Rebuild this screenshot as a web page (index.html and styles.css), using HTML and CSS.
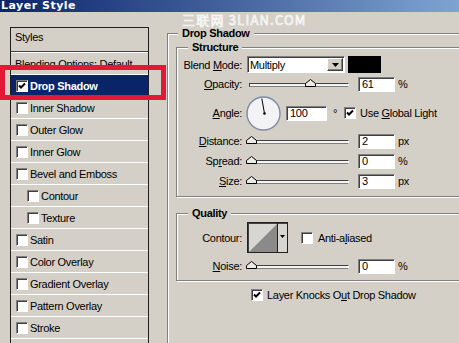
FILE: index.html
```html
<!DOCTYPE html>
<html lang="en">
<head>
    <meta charset="UTF-8">
    <title>Layer Style</title>
    <link rel="stylesheet" href="styles.css">
</head>
<body>
    <div class="titlebar">Layer Style</div>

    <div class="dialog">
        <!-- Styles list -->
        <div class="styles-list">
            <div class="list-head">Styles</div>
            <div class="list-row plain">Blending Options: Default</div>
            <div class="list-row selected">
                <span class="check"><svg viewBox="0 0 10 10"><path d="M2 4.5 L4 6.5 L8 2.5"/></svg></span>Drop Shadow
            </div>
            <div class="list-row"><span class="check"></span>Inner Shadow</div>
            <div class="list-row"><span class="check"></span>Outer Glow</div>
            <div class="list-row"><span class="check"></span>Inner Glow</div>
            <div class="list-row"><span class="check"></span>Bevel and Emboss</div>
            <div class="list-row sub"><span class="check"></span>Contour</div>
            <div class="list-row sub"><span class="check"></span>Texture</div>
            <div class="list-row"><span class="check"></span>Satin</div>
            <div class="list-row"><span class="check"></span>Color Overlay</div>
            <div class="list-row"><span class="check"></span>Gradient Overlay</div>
            <div class="list-row"><span class="check"></span>Pattern Overlay</div>
            <div class="list-row"><span class="check"></span>Stroke</div>
            <div class="list-row"></div>
        </div>

        <!-- Drop Shadow settings -->
        <fieldset class="group outer">
            <legend>Drop Shadow</legend>

            <fieldset class="group structure">
                <legend>Structure</legend>

                <div class="field blend-row">
                    <span class="label">Blend <u>M</u>ode:</span>
                    <div class="select">
                        <span class="select-text">Multiply</span>
                        <span class="drop-btn"><svg width="7" height="4" viewBox="0 0 7 4"><polygon points="0,0 7,0 3.5,4"/></svg></span>
                    </div>
                    <span class="swatch"></span>
                </div>

                <div class="field slider-row">
                    <span class="label"><u>O</u>pacity:</span>
                    <div class="slider">
                        <div class="track"></div>
                        <svg class="thumb" style="left: 59px" width="11" height="8" viewBox="0 0 11 8"><polygon points="0.5,7.5 0.5,4.5 5.5,0.5 10.5,4.5 10.5,7.5"/></svg>
                    </div>
                    <input class="num" type="text" value="61" readonly>
                    <span class="unit">%</span>
                </div>

                <div class="field angle-row">
                    <span class="label"><u>A</u>ngle:</span>
                    <svg class="dial" width="35" height="35" viewBox="0 0 35 35">
                        <circle cx="17.5" cy="17.5" r="16.5" fill="#f3f3f6" stroke="#7d8ba6" stroke-width="1.4"/>
                        <line x1="18.5" y1="17.5" x2="15.8" y2="2.5" stroke="#000" stroke-width="1"/>
                        <circle cx="18.5" cy="17.5" r="1.3" fill="#000"/>
                    </svg>
                    <input class="num angle" type="text" value="100" readonly>
                    <span class="deg">°</span>
                    <span class="check global"><svg viewBox="0 0 10 10"><path d="M2 4.5 L4 6.5 L8 2.5"/></svg></span>
                    <span class="check-text">Use <u>G</u>lobal Light</span>
                </div>

                <div class="field slider-row">
                    <span class="label"><u>D</u>istance:</span>
                    <div class="slider">
                        <div class="track"></div>
                        <svg class="thumb" style="left: 0px" width="11" height="8" viewBox="0 0 11 8"><polygon points="0.5,7.5 0.5,4.5 5.5,0.5 10.5,4.5 10.5,7.5"/></svg>
                    </div>
                    <input class="num" type="text" value="2" readonly>
                    <span class="unit">px</span>
                </div>

                <div class="field slider-row">
                    <span class="label">Sp<u>r</u>ead:</span>
                    <div class="slider">
                        <div class="track"></div>
                        <svg class="thumb" style="left: 0px" width="11" height="8" viewBox="0 0 11 8"><polygon points="0.5,7.5 0.5,4.5 5.5,0.5 10.5,4.5 10.5,7.5"/></svg>
                    </div>
                    <input class="num" type="text" value="0" readonly>
                    <span class="unit">%</span>
                </div>

                <div class="field slider-row">
                    <span class="label"><u>S</u>ize:</span>
                    <div class="slider">
                        <div class="track"></div>
                        <svg class="thumb" style="left: 0px" width="11" height="8" viewBox="0 0 11 8"><polygon points="0.5,7.5 0.5,4.5 5.5,0.5 10.5,4.5 10.5,7.5"/></svg>
                    </div>
                    <input class="num" type="text" value="3" readonly>
                    <span class="unit">px</span>
                </div>
            </fieldset>

            <fieldset class="group quality">
                <legend>Quality</legend>

                <div class="field contour-row">
                    <span class="label">Contour:</span>
                    <svg class="contour" width="41" height="31" viewBox="0 0 41 31">
                        <rect x="0.5" y="0.5" width="40" height="30" fill="#d8d6d0" stroke="#202020"/>
                        <rect x="1" y="1" width="39" height="1" fill="#404040"/>
                        <rect x="1" y="1" width="1" height="29" fill="#404040"/>
                        <polygon points="2,30 30,2 30,30" fill="#8a8a8a"/>
                        <line x1="30.5" y1="1" x2="30.5" y2="30" stroke="#202020"/>
                        <polygon points="33,13 38,13 35.5,16" fill="#000"/>
                    </svg>
                    <span class="check anti"></span>
                    <span class="check-text">Anti-a<u>l</u>iased</span>
                </div>

                <div class="field slider-row">
                    <span class="label"><u>N</u>oise:</span>
                    <div class="slider">
                        <div class="track"></div>
                        <svg class="thumb" style="left: 0px" width="11" height="8" viewBox="0 0 11 8"><polygon points="0.5,7.5 0.5,4.5 5.5,0.5 10.5,4.5 10.5,7.5"/></svg>
                    </div>
                    <input class="num" type="text" value="0" readonly>
                    <span class="unit">%</span>
                </div>
            </fieldset>

            <div class="knockout">
                <span class="check"><svg viewBox="0 0 10 10"><path d="M2 4.5 L4 6.5 L8 2.5"/></svg></span>
                <span class="check-text">Layer Knocks O<u>u</u>t Drop Shadow</span>
            </div>
        </fieldset>
    </div>

    <!-- overlays -->
    <div class="watermark">三联网 3LIAN.COM</div>
    <div class="callout"></div>
</body>
</html>
```

FILE: styles.css
```css
/* General Styles */
* {
    margin: 0;
    padding: 0;
    box-sizing: border-box;
}

body {
    position: relative;
    width: 459px;
    height: 343px;
    overflow: hidden;
    background-color: #d4d0c8;
    font-family: "Liberation Sans", Arial, sans-serif;
    font-size: 11px;
    letter-spacing: -0.3px;
    color: #000;
}

/* Title bar */
.titlebar {
    height: 12px;
    line-height: 12px;
    padding-left: 1px;
    background: linear-gradient(to right, #0a246a, #80a3d3);
    color: #fff;
    font-family: "DejaVu Sans", sans-serif;
    font-size: 11px;
    font-weight: bold;
    letter-spacing: 0.5px;
    white-space: nowrap;
}

.dialog {
    display: flex;
    align-items: flex-start;
    padding: 15px 0 0 10px;
}

/* Styles list */
.styles-list {
    flex-shrink: 0;
    width: 139px;
    height: 340px;
    border: 1px solid #202020;
}

.list-head {
    height: 24px;
    line-height: 19px;
    padding-left: 4px;
    border-bottom: 1px solid #404040;
}

.list-row {
    display: flex;
    align-items: center;
    height: 22px;
    padding-left: 5px;
    border-top: 1px solid #fff;
    white-space: nowrap;
}

.list-row.plain {
    padding-left: 4px;
}

.list-row.sub {
    padding-left: 16px;
}

.list-row.selected {
    background-color: #0a246a;
    color: #fff;
    font-weight: bold;
}

/* Checkboxes */
.check {
    flex-shrink: 0;
    display: flex;
    width: 12px;
    height: 12px;
    margin-right: 2px;
    border: 1px solid;
    border-color: #808080 #fff #fff #808080;
    box-shadow: inset 1px 1px 0 #404040;
    background-color: #fff;
}

.check svg {
    width: 10px;
    height: 10px;
}

.check path {
    fill: none;
    stroke: #000;
    stroke-width: 2;
}

/* Group boxes */
.group {
    min-width: 0;
    border: 1px solid #808080;
    box-shadow: inset 1px 1px 0 #fff, 1px 1px 0 #fff;
}

.group legend {
    padding: 0 4px;
    line-height: 13px;
    font-weight: bold;
    background-color: #d4d0c8;
}

.outer {
    flex-shrink: 0;
    width: 330px;
    margin-left: 18px;
    padding: 1px 0 80px 8px;
}

.outer > legend {
    margin-left: 2px;
}

.structure,
.quality {
    padding: 2px 0 5px 4px;
}

.structure > legend,
.quality > legend {
    margin-left: 7px;
}

.quality {
    margin-top: 10px;
    padding-bottom: 4px;
}

/* Rows */
.field {
    display: flex;
    align-items: center;
    white-space: nowrap;
}

.field + .field {
    margin-top: 2px;
}

.label {
    flex-shrink: 0;
    width: 61px;
    margin-right: 4px;
    text-align: right;
}

.blend-row {
    height: 17px;
}

.slider-row {
    height: 18px;
}

.structure .slider-row ~ .slider-row {
    height: 20px;
    margin-top: 0;
}

.angle-row {
    height: 36px;
}

.angle-row + .slider-row {
    margin-top: 2px;
}

/* Blend mode select */
.select {
    display: flex;
    align-items: center;
    justify-content: space-between;
    width: 98px;
    height: 17px;
    margin-left: 1px;
    padding-left: 2px;
    border: 1px solid;
    border-color: #808080 #fff #fff #808080;
    box-shadow: inset 1px 1px 0 #404040;
    background-color: #fff;
}

.select-text {
    padding-top: 1px;
}

.drop-btn {
    display: flex;
    align-items: center;
    justify-content: center;
    width: 16px;
    height: 13px;
    margin-right: 1px;
    border: 1px solid;
    border-color: #fff #404040 #404040 #fff;
    box-shadow: inset -1px -1px 0 #808080;
    background-color: #d4d0c8;
}

.swatch {
    width: 33px;
    height: 17px;
    margin-left: 3px;
    background-color: #000;
}

/* Sliders */
.slider {
    position: relative;
    flex-shrink: 0;
    width: 103px;
    height: 12px;
}

.track {
    width: 100px;
    height: 4px;
    margin: 5px 0 0 3px;
    border: 1px solid;
    border-color: #404040 #fff #808080 #404040;
    background-color: #f4f4f4;
}

.thumb {
    position: absolute;
    top: 1px;
}

.thumb polygon {
    fill: #ecebe8;
    stroke: #000;
    stroke-width: 1;
}

.num {
    flex-shrink: 0;
    width: 37px;
    height: 15px;
    margin-left: 9px;
    padding: 0 0 0 3px;
    border: 1px solid;
    border-color: #808080 #fff #fff #808080;
    box-shadow: inset 1px 1px 0 #404040;
    background-color: #fff;
    font: inherit;
    letter-spacing: inherit;
    color: #000;
    outline: none;
}

.num.angle {
    width: 41px;
    margin-left: 5px;
}

.unit {
    margin-left: 3px;
}

.deg {
    margin-left: 6px;
    align-self: flex-start;
    margin-top: 12px;
}

.check.global {
    margin-left: 7px;
}

.check-text {
    margin-left: 2px;
}

/* Quality */
.contour-row {
    height: 31px;
}

.contour-row + .slider-row {
    height: 20px;
    margin-top: 3px;
}

.contour {
    margin-left: 1px;
}

.check.anti {
    margin-left: 13px;
    margin-right: 3px;
}

.knockout {
    display: flex;
    align-items: center;
    height: 16px;
    margin-top: 6px;
    padding-left: 75px;
    white-space: nowrap;
}

/* Overlays */
.watermark {
    position: absolute;
    top: 13px;
    left: 182px;
    font-family: "Noto Sans CJK SC", "Noto Sans", sans-serif;
    font-size: 13px;
    line-height: 13px;
    letter-spacing: 1.2px;
    color: rgba(255, 255, 255, 0.3);
    -webkit-text-stroke: 0.7px rgba(255, 255, 255, 0.9);
    white-space: nowrap;
}

.callout {
    position: absolute;
    top: 65px;
    left: 0;
    width: 166px;
    height: 35px;
    border: 5px solid #e31837;
}
```
